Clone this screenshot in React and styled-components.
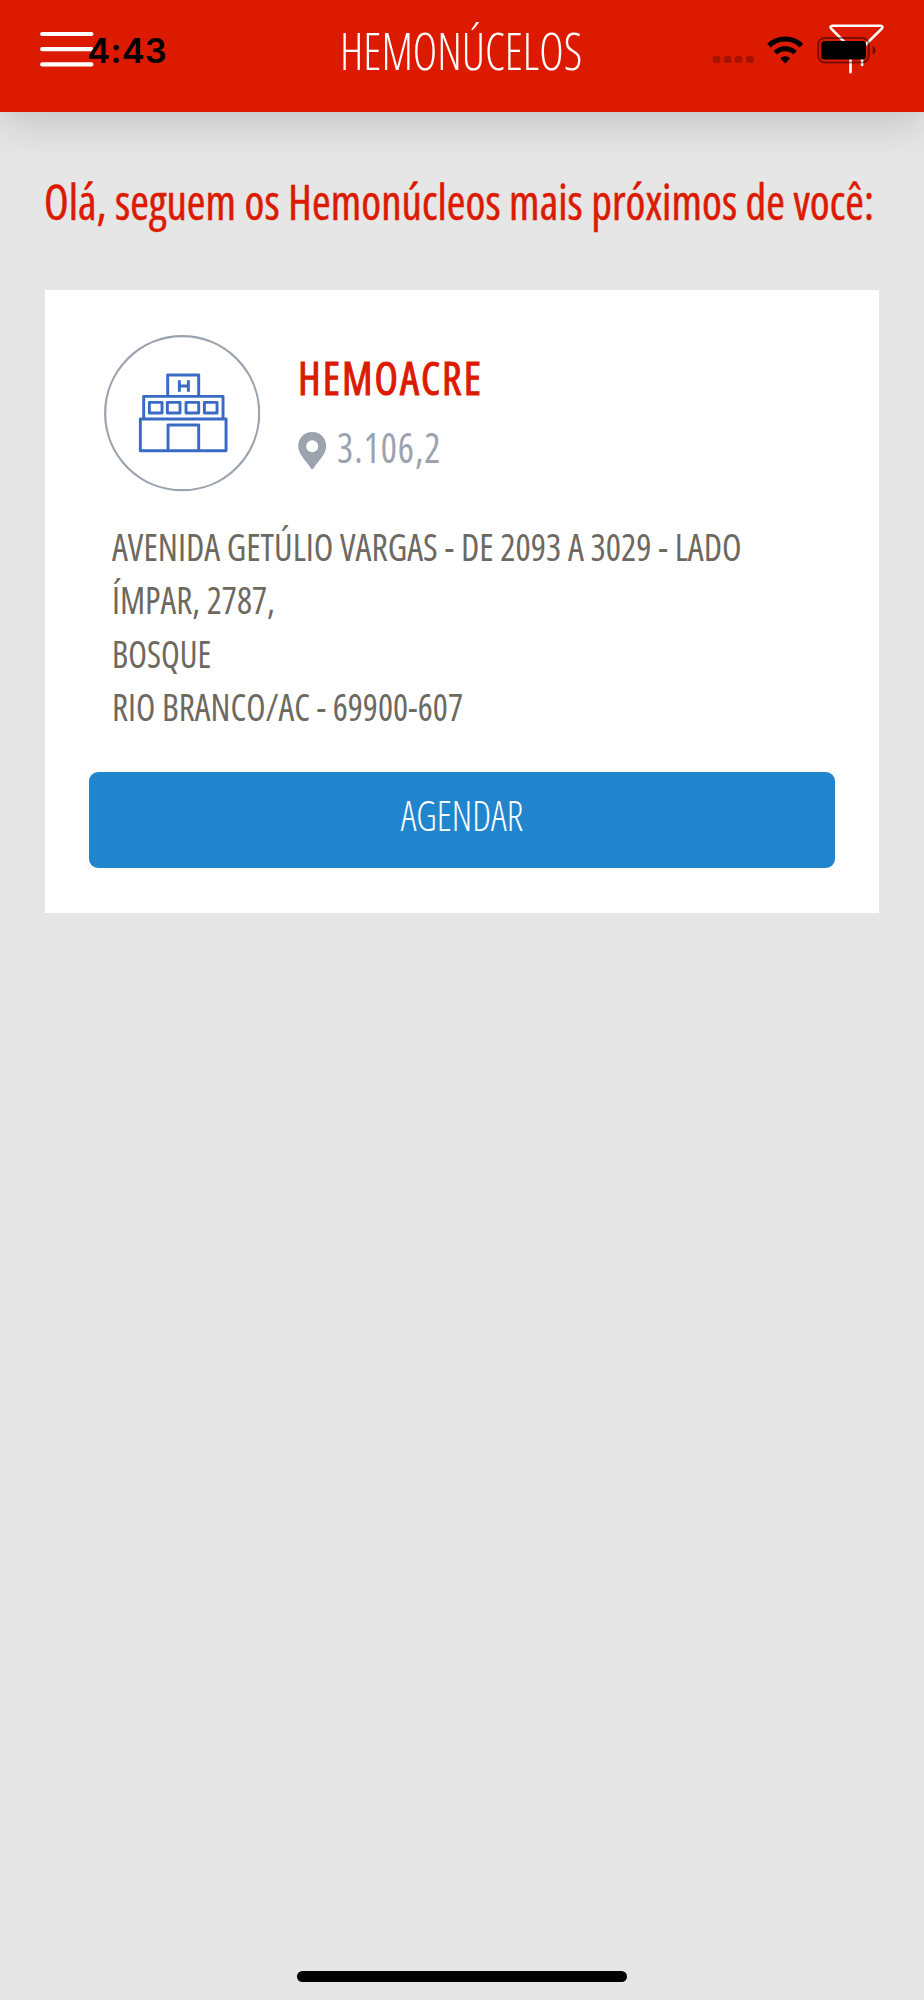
import React from "react";
import styled, { createGlobalStyle } from "styled-components";

const GlobalStyle = createGlobalStyle`
  * { box-sizing: border-box; }
  body { margin: 0; background: #e6e6e6; }
`;

const Screen = styled.div`
  position: relative;
  width: 924px;
  height: 2000px;
  overflow: hidden;
  display: flex;
  flex-direction: column;
  background: #e6e6e6;
  font-family: "Open Sans", "Liberation Sans", sans-serif;
  font-stretch: 75%;
`;

const Header = styled.header`
  display: flex;
  justify-content: space-between;
  align-items: flex-start;
  height: 111.6px;
  padding: 0 40px 0 39px;
  background: #dc1a00;
  box-shadow: 0 12px 40px rgba(0, 0, 0, 0.15);
`;

const MenuIcon = styled.svg`
  width: 55px;
  height: 40px;
  margin-top: 30px;
`;

const FilterIcon = styled.svg`
  width: 55px;
  height: 52px;
  margin-top: 23px;
`;

/* Text narrowed horizontally around its own origin */
const Narrow = styled.span`
  display: inline-block;
  white-space: nowrap;
  transform: scaleX(${(p) => p.$x});
  transform-origin: ${(p) => p.$origin || "left"} center;
`;

const Title = styled.h1`
  margin: 0;
  font-size: 52.2px;
  line-height: 100px;
  font-weight: 300;
  color: #fff;
`;

const StatusBar = styled.div`
  position: absolute;
  top: 0;
  left: 0;
  width: 100%;
  height: 102px;
  padding: 0 48px 0 87.3px;
  display: flex;
  align-items: center;
  justify-content: space-between;
`;

const Time = styled.div`
  font: 600 34.5px/40px Inter, sans-serif;
  letter-spacing: 0.2px;
  color: #000;
`;

const StatusIcons = styled.svg`
  width: 166px;
  height: 34px;
`;

const Greeting = styled.p`
  margin: 57px 0 0;
  padding-left: 44.3px;
  height: 121.4px;
  font-size: 48.4px;
  line-height: 64px;
  color: #dc1a00;
  -webkit-text-stroke: 0.5px currentColor;
`;

const Card = styled.article`
  width: 834px;
  height: 623px;
  margin-left: 45px;
  padding: 45.2px 44.5px 44.5px 44.3px;
  display: flex;
  flex-direction: column;
  background: #fff;
`;

const CardHead = styled.div`
  display: flex;
  gap: 38px;
  padding-left: 14.8px;
`;

const HospitalIcon = styled.svg`
  width: 156.4px;
  height: 156.4px;
  flex: none;
`;

const Summary = styled.div`
  display: flex;
  flex-direction: column;
  padding-top: 13px;
`;

const Name = styled.h2`
  margin: 0;
  font-size: 46.2px;
  line-height: 60px;
  font-weight: 400;
  letter-spacing: 2.2px;
  color: #dc1a00;
  -webkit-text-stroke: 1.1px currentColor;
`;

const Distance = styled.div`
  display: flex;
  gap: 10.5px;
  margin-top: 13.5px;
  font-size: 41px;
  line-height: 50px;
  letter-spacing: 1px;
  color: #9ca3af;
`;

const PinIcon = styled.svg`
  width: 28.5px;
  height: 37.5px;
  margin-top: 10px;
`;

const Address = styled.address`
  margin: 28px 0 0 22.7px;
  font-size: 37.9px;
  line-height: 53.6px;
  font-style: normal;
  color: #6d695f;
`;

const AddressLine = styled.div`
  height: 53.6px;
`;

const ScheduleButton = styled.button`
  width: 100%;
  height: 96px;
  margin-top: auto;
  padding: 0;
  display: flex;
  justify-content: center;
  align-items: flex-start;
  border: 0;
  border-radius: 9px;
  background: #2185ce;
  color: #fff;
  font-family: inherit;
  font-stretch: inherit;
  font-size: 42.2px;
  font-weight: 300;
  line-height: 86px;
`;

const HomeIndicator = styled.div`
  width: 330px;
  height: 11px;
  margin: auto auto 18px;
  border-radius: 6px;
  background: #000;
`;

const ADDRESS = [
  { text: "AVENIDA GETÚLIO VARGAS - DE 2093 A 3029 - LADO", x: 0.947 },
  { text: "ÍMPAR, 2787,", x: 0.935 },
  { text: "BOSQUE", x: 0.905 },
  { text: "RIO BRANCO/AC - 69900-607", x: 0.936 },
];

function Hospital() {
  return (
    <HospitalIcon viewBox="42 44 469 469" fill="none" stroke="#396bc5" strokeWidth="8.8" strokeLinejoin="round">
      <circle cx="276.5" cy="278.5" r="231" stroke="#9aa2ae" strokeWidth="6.6" />
      <path d="M233 227V164H326V227" />
      <path d="M268 180V214M295 180V214M267 197H296" />
      <path d="M161 295V228H399V295" />
      <rect x="178" y="246" width="38" height="32" />
      <rect x="232" y="246" width="38" height="32" />
      <rect x="288" y="246" width="38" height="32" />
      <rect x="343" y="246" width="38" height="32" />
      <rect x="151" y="296" width="257" height="95" />
      <path d="M234 391V314H326V391" />
    </HospitalIcon>
  );
}

export default function App() {
  return (
    <>
      <GlobalStyle />
      <Screen>
        <Header>
          <MenuIcon viewBox="0 0 55 40" stroke="#fff" strokeWidth="4.2" strokeLinecap="round">
            <path d="M3.2 4H52.4M3.2 19.2H52.4M3.2 34.4H52.4" />
          </MenuIcon>
          <Title>
            <Narrow $x={0.89} $origin="center">HEMONÚCELOS</Narrow>
          </Title>
          <FilterIcon viewBox="829.5 23 55 52" fill="none" stroke="#fff" strokeWidth="2.6" strokeLinecap="round" strokeLinejoin="round">
            <path d="M851 72.3V48L831.7 28.6Q830 26 833 25.8H881Q884 26 882.3 28.6L862.6 48V65" />
          </FilterIcon>
        </Header>

        <StatusBar>
          <Time>4:43</Time>
          <StatusIcons viewBox="710 34 166 34">
            <g fill="#000" fillOpacity="0.25">
              <rect x="712.7" y="56" width="7.6" height="7" rx="2" />
              <rect x="723.8" y="56" width="7.6" height="7" rx="2" />
              <rect x="734.8" y="56" width="7.6" height="7" rx="2" />
              <rect x="746" y="56" width="7.6" height="7" rx="2" />
            </g>
            <g fill="none" stroke="#000" strokeWidth="5">
              <path d="M769 45.6A23.3 23.3 0 0 1 801.4 45.6" />
              <path d="M775.3 52.8A14.2 14.2 0 0 1 795.1 52.8" />
            </g>
            <path d="M785.2 63.4L780.2 58.2A7.3 7.3 0 0 1 790.2 58.2Z" />
            <rect x="818.2" y="37.9" width="50.6" height="24.6" rx="6.6" fill="none" stroke="#000" strokeOpacity="0.45" strokeWidth="2" />
            <rect x="821.2" y="41" width="44.8" height="18.6" rx="3.6" />
            <path d="M872.7 45.8Q875.6 47.3 875.6 50.3T872.7 54.8Z" fillOpacity="0.5" />
          </StatusIcons>
        </StatusBar>

        <Greeting>
          <Narrow $x={0.936}>Olá, seguem os Hemonúcleos mais próximos de você:</Narrow>
        </Greeting>

        <Card>
          <CardHead>
            <Hospital />
            <Summary>
              <Name>
                <Narrow $x={0.93}>HEMOACRE</Narrow>
              </Name>
              <Distance>
                <PinIcon viewBox="0 0 28.5 37.5" fill="#9ca3af">
                  <path fillRule="evenodd" d="M14.2 0C6.2 0 .2 6.2.2 14C.2 22 7 27.5 12.8 36.2Q14.2 38.3 15.6 36.2C21.4 27.5 28.2 22 28.2 14C28.2 6.2 22.2 0 14.2 0ZM14.2 8.2A6 6 0 1 1 14.2 20.2A6 6 0 1 1 14.2 8.2Z" />
                </PinIcon>
                <Narrow $x={0.93}>3.106,2</Narrow>
              </Distance>
            </Summary>
          </CardHead>

          <Address>
            {ADDRESS.map((line) => (
              <AddressLine key={line.text}>
                <Narrow $x={line.x}>{line.text}</Narrow>
              </AddressLine>
            ))}
          </Address>

          <ScheduleButton>
            <Narrow $x={0.915} $origin="center">AGENDAR</Narrow>
          </ScheduleButton>
        </Card>

        <HomeIndicator />
      </Screen>
    </>
  );
}
